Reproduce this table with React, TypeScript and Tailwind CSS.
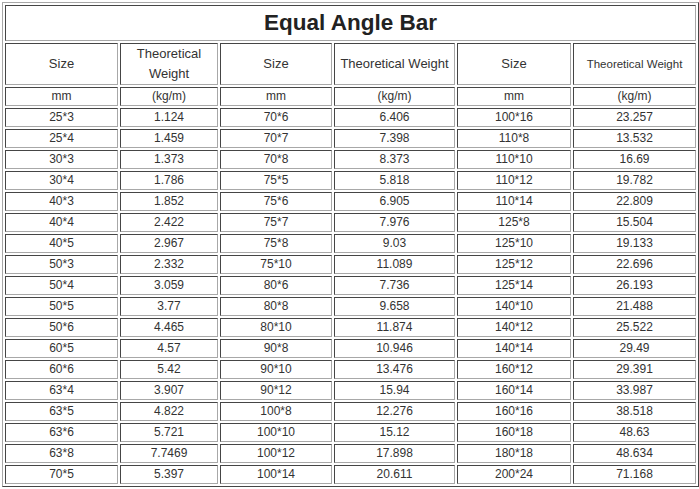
const rows: string[][] = [
  ["25*3", "1.124", "70*6", "6.406", "100*16", "23.257"],
  ["25*4", "1.459", "70*7", "7.398", "110*8", "13.532"],
  ["30*3", "1.373", "70*8", "8.373", "110*10", "16.69"],
  ["30*4", "1.786", "75*5", "5.818", "110*12", "19.782"],
  ["40*3", "1.852", "75*6", "6.905", "110*14", "22.809"],
  ["40*4", "2.422", "75*7", "7.976", "125*8", "15.504"],
  ["40*5", "2.967", "75*8", "9.03", "125*10", "19.133"],
  ["50*3", "2.332", "75*10", "11.089", "125*12", "22.696"],
  ["50*4", "3.059", "80*6", "7.736", "125*14", "26.193"],
  ["50*5", "3.77", "80*8", "9.658", "140*10", "21.488"],
  ["50*6", "4.465", "80*10", "11.874", "140*12", "25.522"],
  ["60*5", "4.57", "90*8", "10.946", "140*14", "29.49"],
  ["60*6", "5.42", "90*10", "13.476", "160*12", "29.391"],
  ["63*4", "3.907", "90*12", "15.94", "160*14", "33.987"],
  ["63*5", "4.822", "100*8", "12.276", "160*16", "38.518"],
  ["63*6", "5.721", "100*10", "15.12", "160*18", "48.63"],
  ["63*8", "7.7469", "100*12", "17.898", "180*18", "48.634"],
  ["70*5", "5.397", "100*14", "20.611", "200*24", "71.168"],
];

// inset look of a border="1" cell
const cell =
  "border border-t-[#454545] border-l-[#454545] border-r-[#a8a8a8] border-b-[#a8a8a8] p-0 text-center align-middle";

export default function App() {
  return (
    <div className="bg-white w-[699px] h-[489px] pt-[2px] pl-[2px] font-['Liberation_Sans',Arial,sans-serif] text-[#333]">
      <table className="table-fixed w-[697px] border-separate border-spacing-[2px] border border-t-[#a8a8a8] border-l-[#a8a8a8] border-r-[#454545] border-b-[#454545]">
        <colgroup>
          <col className="w-[113px]" />
          <col className="w-[98px]" />
          <col className="w-[112px]" />
          <col className="w-[121px]" />
          <col className="w-[114px]" />
          <col className="w-[123px]" />
        </colgroup>
        <tbody>
          <tr>
            <td colSpan={6} className={`${cell} h-[36px] text-[22.5px] font-bold text-[#222]`}>
              Equal Angle Bar
            </td>
          </tr>
          <tr className="text-[13px] leading-[20px]">
            <td className={`${cell} h-[42px]`}>Size</td>
            <td className={cell}>Theoretical Weight</td>
            <td className={cell}>Size</td>
            <td className={cell}>Theoretical Weight</td>
            <td className={cell}>Size</td>
            <td className={`${cell} text-[11.5px]`}>Theoretical Weight</td>
          </tr>
          <tr className="text-[12px] leading-[17px]">
            <td className={`${cell} h-[19px]`}>mm</td>
            <td className={cell}>(kg/m)</td>
            <td className={cell}>mm</td>
            <td className={cell}>(kg/m)</td>
            <td className={cell}>mm</td>
            <td className={cell}>(kg/m)</td>
          </tr>
          {rows.map((r) => (
            <tr key={r[0]} className="text-[12px] leading-[17px]">
              {r.map((v, i) => (
                <td key={i} className={`${cell} h-[19px]`}>
                  {v}
                </td>
              ))}
            </tr>
          ))}
        </tbody>
      </table>
    </div>
  );
}
